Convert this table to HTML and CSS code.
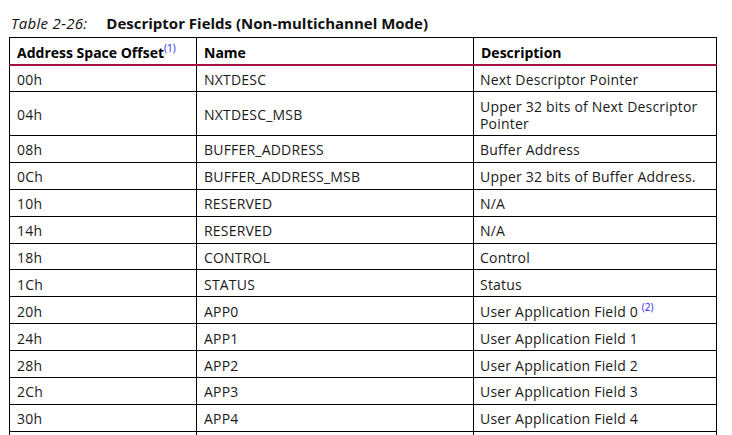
FILE: index.html
```html
<!DOCTYPE html>
<html>
<head>
<meta charset="utf-8">
<link rel="stylesheet" href="styles.css">
</head>
<body>
<div class="caption"><span class="cap-num">Table 2-26:</span><span class="cap-title">Descriptor Fields (Non-multichannel Mode)</span></div>
<table class="desc">
  <colgroup><col class="c1"><col class="c2"><col class="c3"></colgroup>
  <thead>
    <tr><th>Address Space Offset<sup class="note">(1)</sup></th><th>Name</th><th>Description</th></tr>
  </thead>
  <tbody>
    <tr class="r0"><td>00h</td><td>NXTDESC</td><td>Next Descriptor Pointer</td></tr>
    <tr class="r2"><td>04h</td><td>NXTDESC_MSB</td><td>Upper 32 bits of Next Descriptor Pointer</td></tr>
    <tr><td>08h</td><td>BUFFER_ADDRESS</td><td>Buffer Address</td></tr>
    <tr><td>0Ch</td><td>BUFFER_ADDRESS_MSB</td><td>Upper 32 bits of Buffer Address.</td></tr>
    <tr><td>10h</td><td>RESERVED</td><td>N/A</td></tr>
    <tr><td>14h</td><td>RESERVED</td><td>N/A</td></tr>
    <tr><td>18h</td><td>CONTROL</td><td>Control</td></tr>
    <tr><td>1Ch</td><td>STATUS</td><td>Status</td></tr>
    <tr><td>20h</td><td>APP0</td><td>User Application Field 0 <sup class="note">(2)</sup></td></tr>
    <tr><td>24h</td><td>APP1</td><td>User Application Field 1</td></tr>
    <tr><td>28h</td><td>APP2</td><td>User Application Field 2</td></tr>
    <tr><td>2Ch</td><td>APP3</td><td>User Application Field 3</td></tr>
    <tr><td>30h</td><td>APP4</td><td>User Application Field 4</td></tr>
    <tr class="spare"><td></td><td></td><td></td></tr>
  </tbody>
</table>
</body>
</html>
```
FILE: styles.css
```css
html, body {
  margin: 0;
  padding: 0;
  background: #ffffff;
  overflow: hidden;
  height: 435px;
}
body {
  font-family: "Open Sans", "Noto Sans", sans-serif;
  color: #1a1a1a;
}
.caption {
  padding: 13px 0 0 11px;
  height: 24px;
  font-size: 15px;
  line-height: 21px;
  color: #111;
}
.cap-num {
  font-style: italic;
  letter-spacing: 0.3px;
  margin-right: 19px;
}
.cap-title {
  font-weight: 700;
}
.desc {
  margin-left: 9px;
  border-collapse: collapse;
  table-layout: fixed;
  width: 707px;
  font-size: 14px;
  letter-spacing: 0.2px;
}
.c1 { width: 187px; }
.c2 { width: 277px; }
.c3 { width: 243px; }
.desc th, .desc td {
  border: 1px solid #000;
  padding: 2px 5px 0 7px;
  text-align: left;
  vertical-align: middle;
  line-height: 17px;
}
.desc th {
  font-weight: 700;
  color: #000;
  height: 24px;
  letter-spacing: 0;
  border-bottom: 2px solid #a4123f;
}
.desc td {
  height: 23.9px;
}
.desc td:nth-child(3) {
  padding-left: 6px;
}
.desc tr.r0 td { height: 23px; }
.desc tr.r2 td { height: 41px; }
.note {
  color: #1a1aff;
  font-size: 10px;
  font-weight: 400;
  letter-spacing: 0;
  vertical-align: 6px;
  line-height: 0;
}
```
